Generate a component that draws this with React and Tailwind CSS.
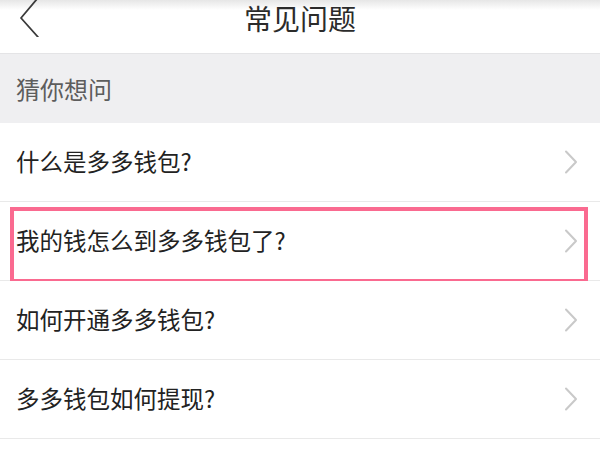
import React from "react";

const font = { fontFamily: '"Noto Sans CJK SC", "Noto Sans", sans-serif' };

function Chevron() {
  return (
    <svg width="14" height="24" viewBox="0 0 14 24" className="shrink-0">
      <path d="M2 1.5 L12 12 L2 22.5" fill="none" stroke="#c9c9c9" strokeWidth="2" strokeLinecap="round" strokeLinejoin="round" />
    </svg>
  );
}

function Row({ text, highlight }) {
  return (
    <div className="relative h-[79px] bg-white">
      <div className="flex h-full items-center justify-between pl-[16px] pr-[22px] border-b border-[#e9e9e9]">
        <span className="text-[23.5px] text-[#222222] leading-none">{text}</span>
        <Chevron />
      </div>
      {highlight && (
        <div className="absolute left-[10px] right-[12px] top-[5px] bottom-[-2px] border-[4px] border-[#fa6a90] pointer-events-none" />
      )}
    </div>
  );
}

export default function App() {
  const items = [
    "什么是多多钱包?",
    "我的钱怎么到多多钱包了?",
    "如何开通多多钱包?",
    "多多钱包如何提现?",
  ];
  return (
    <div className="w-[600px] h-[450px] overflow-hidden bg-white" style={font}>
      <div className="relative h-[53px] bg-white flex justify-center pt-[2px]">
        <div className="absolute inset-x-0 top-0 h-[10px] bg-gradient-to-b from-[#e6e6e6] to-white" />
        <svg width="24" height="40" viewBox="0 0 24 40" className="absolute left-[18px] top-[-3px]">
          <path d="M19 2 L3 21 L20 40" fill="none" stroke="#3a3a3a" strokeWidth="1.8" strokeLinecap="round" strokeLinejoin="round" />
        </svg>
        <span className="relative text-[28px] leading-[32px] text-[#2b2b2b]">常见问题</span>
      </div>
      <div className="h-[70px] bg-[#efeff1] flex items-center pl-[16px] border-t border-[#e4e4e6]">
        <span className="text-[24px] text-[#5d5d5d] leading-none">猜你想问</span>
      </div>
      <div className="flex flex-col">
        {items.map((t, i) => (
          <Row key={i} text={t} highlight={i === 1} />
        ))}
      </div>
    </div>
  );
}
